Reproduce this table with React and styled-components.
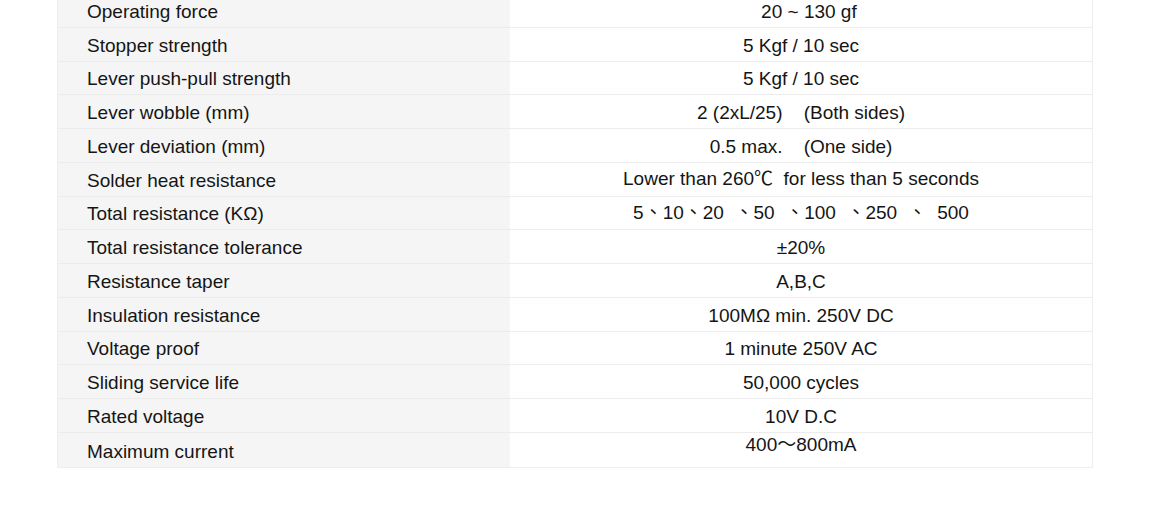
import styled, { createGlobalStyle } from 'styled-components';

const specs = [
    { name: 'Operating force', value: '   20 ~ 130 gf' },
    { name: 'Stopper strength', value: '5 Kgf / 10 sec' },
    { name: 'Lever push-pull strength', value: '5 Kgf / 10 sec' },
    { name: 'Lever wobble (mm)', value: '2 (2xL/25)    (Both sides)' },
    { name: 'Lever deviation (mm)', value: '0.5 max.    (One side)' },
    { name: 'Solder heat resistance', value: 'Lower than 260℃  for less than 5 seconds', raised: 2 },
    { name: 'Total resistance (KΩ)', value: '5、10、20  、50  、100  、250  、  500', raised: 1 },
    { name: 'Total resistance tolerance', value: '±20%' },
    { name: 'Resistance taper', value: 'A,B,C' },
    { name: 'Insulation resistance', value: '100MΩ min. 250V DC' },
    { name: 'Voltage proof', value: '1 minute 250V AC' },
    { name: 'Sliding service life', value: '50,000 cycles' },
    { name: 'Rated voltage', value: '10V D.C' },
    { name: 'Maximum current', value: '400～800mA', raised: 7 },
];

const GlobalStyle = createGlobalStyle`
    html, body {
        margin: 0;
        padding: 0;
        background-color: #ffffff;
        overflow: hidden;
    }
`;

const Page = styled.div`
    width: 1150px;
    height: 525px;
    padding: 0 57px;
    box-sizing: border-box;
    font-family: "Liberation Sans", Arial, "Noto Sans CJK TC", sans-serif;
    color: #151515;
`;

const SpecTable = styled.div`
    margin-top: -6px;
    width: 1036px;
    display: flex;
    flex-direction: column;
    border: 1px solid #eeeeee;
    border-top: none;
    box-sizing: border-box;
`;

const Row = styled.div`
    display: grid;
    grid-template-columns: 452px 1fr;
    height: 33.75px;
    box-sizing: border-box;
    border-bottom: 1px solid #ececec;
    overflow: hidden;

    &:last-child {
        border-bottom: none;
    }
`;

const NameCell = styled.div`
    display: flex;
    align-items: center;
    padding: 2px 0 0 29px;
    background-color: #f5f5f5;
    font-size: 19px;
    line-height: 1;
    white-space: pre;
`;

const ValueCell = styled.div`
    display: flex;
    align-items: center;
    justify-content: center;
    padding-top: 2px;
    padding-bottom: ${(p) => (p.$raised ? p.$raised * 2 : 0)}px;
    box-sizing: border-box;
    background-color: #ffffff;
    font-size: 19px;
    line-height: 1;
    white-space: pre;
`;

const App = () => {
    return (
        <Page>
            <GlobalStyle />
            <SpecTable>
                {specs.map((s) => (
                    <Row key={s.name}>
                        <NameCell>{s.name}</NameCell>
                        <ValueCell $raised={s.raised}>{s.value}</ValueCell>
                    </Row>
                ))}
            </SpecTable>
        </Page>
    );
};

export default App;
